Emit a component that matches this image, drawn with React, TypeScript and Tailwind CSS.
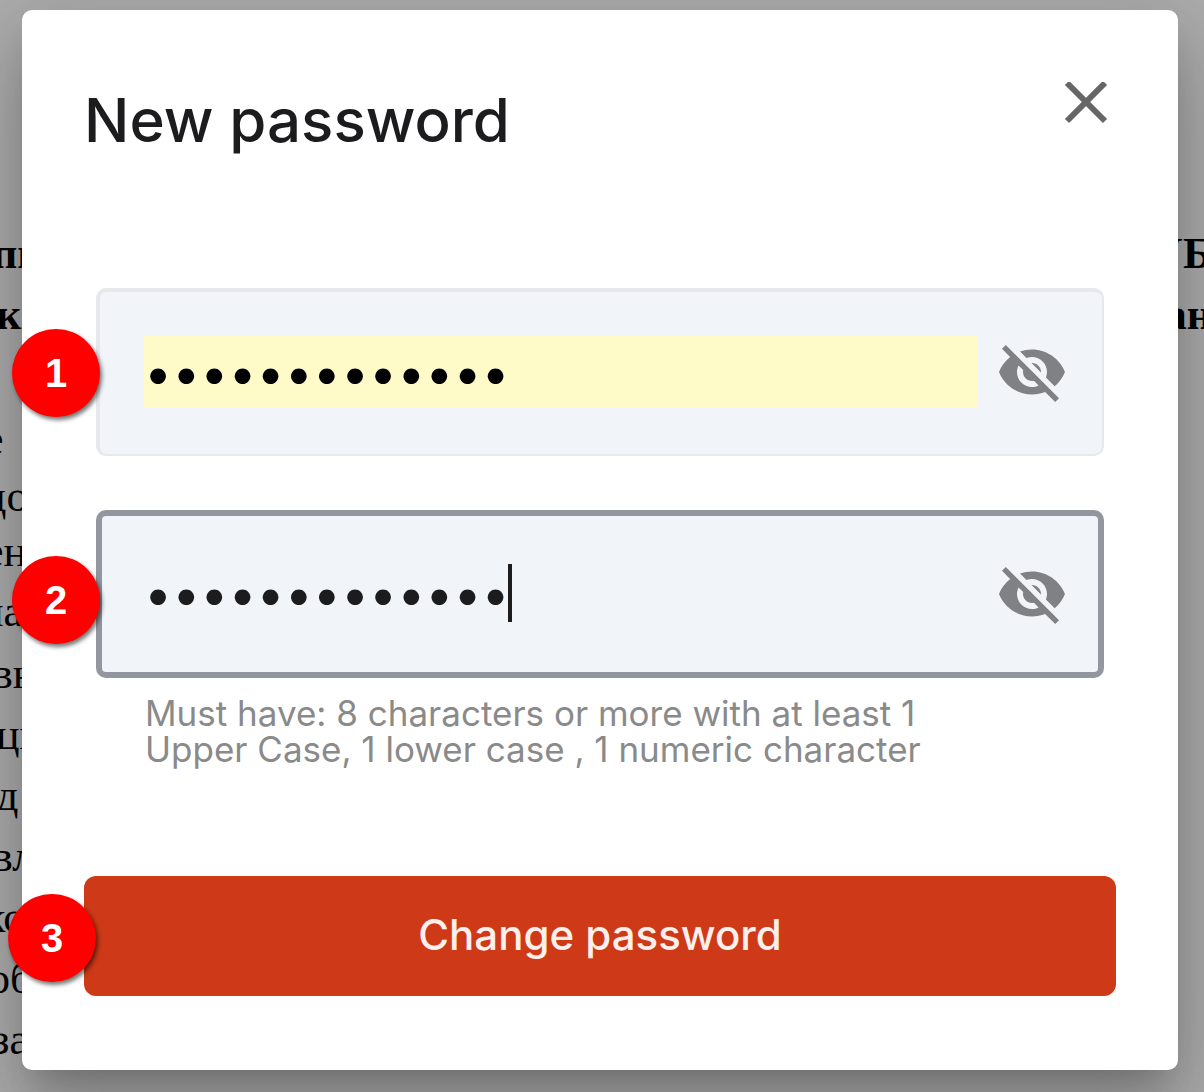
import { useState } from "react";
import { MdVisibilityOff } from "react-icons/md";

// Page behind the dialog
const pageLines = [
  { start: "пи", end: "УБ", className: "-ml-2 font-bold leading-[61px]" },
  { start: "ки", end: "ан", className: "-ml-1 font-bold leading-[61px]" },
  { start: "", end: "", className: "h-[64px]" },
  { start: "е", end: "", className: "-ml-4 leading-[61px]" },
  { start: "до", end: "", className: "-ml-4 leading-[53px]" },
  { start: "ен", end: "", className: "-ml-4 leading-[57px]" },
  { start: "на", end: "", className: "-ml-5 leading-[63px]" },
  { start: "вн", end: "", className: "-ml-2 leading-[61px]" },
  { start: "ци", end: "", className: "-ml-1 leading-[61px]" },
  { start: "д", end: "", className: "-ml-1 leading-[61px]" },
  { start: "вл", end: "", className: "-ml-2 leading-[61px]" },
  { start: "ко", end: "", className: "-ml-4 leading-[61px]" },
  { start: "об", end: "", className: "-ml-3 leading-[61px]" },
  { start: "за", end: "", className: "-ml-2 leading-[61px]" },
];

function Badge({ step, className }: { step: number; className: string }) {
  return (
    <span
      className={`absolute z-10 flex h-[88px] w-[88px] items-center justify-center rounded-full bg-[#ff0000] font-['Liberation_Sans',sans-serif] text-[40px] font-bold leading-none text-white shadow-[2px_3px_4px_rgba(0,0,0,0.55)] ${className}`}
    >
      {step}
    </span>
  );
}

export default function App() {
  const [password, setPassword] = useState("Abcdefgh12345");
  const [confirm, setConfirm] = useState("Abcdefgh12345");
  const [hidden, setHidden] = useState(true);
  const [confirmHidden, setConfirmHidden] = useState(true);

  return (
    <div className="relative min-h-screen overflow-hidden bg-[#adadad] font-['Inter',sans-serif]">
      <div
        aria-hidden="true"
        className="absolute inset-0 overflow-hidden pt-[223px] font-['Liberation_Serif',serif] text-[44px] text-black"
      >
        {pageLines.map((line, i) => (
          <p key={i} className={`flex justify-between ${line.className}`}>
            <span>{line.start}</span>
            <span className="-mr-2">{line.end}</span>
          </p>
        ))}
      </div>

      <div className="relative pt-[10px] pr-[26px] pb-[22px] pl-[22px]">
        <form
          role="dialog"
          aria-labelledby="dialog-title"
          onSubmit={(e) => e.preventDefault()}
          className="rounded-[10px] bg-white px-[62px] pt-[72px] pb-[74px] shadow-[0_22px_30px_-14px_rgba(0,0,0,0.2),0_48px_76px_6px_rgba(0,0,0,0.14),0_18px_92px_16px_rgba(0,0,0,0.12)]"
        >
          {/* Header */}
          <div className="flex h-[206px] items-start justify-between">
            <h1 id="dialog-title" className="text-[60px] font-medium leading-[76px] text-[#1c1c1e]">
              New password
            </h1>
            <button type="button" aria-label="Close" className="mr-2 text-[#666666]">
              <svg viewBox="0 0 44 44" className="h-11 w-11" fill="none" stroke="currentColor" strokeWidth="6">
                <path d="M3 1 41 39M41 1 3 39" />
              </svg>
            </button>
          </div>

          {/* Fields */}
          <div className="px-3">
            <div className="relative flex h-[168px] items-center justify-between rounded-[10px] border-t-4 border-r-2 border-b-2 border-l-4 border-[#e6e8ed] bg-[#f1f5fa] pr-[34px] pb-0.5 pl-11">
              <Badge step={1} className="top-[37px] -left-[88px]" />
              <input
                type={hidden ? "password" : "text"}
                aria-label="New password"
                value={password}
                onChange={(e) => setPassword(e.target.value)}
                className="mr-[18px] h-[72px] min-w-0 flex-1 bg-[#fffbc8] px-0 pt-0.5 text-[50px] text-black outline-none"
              />
              <button type="button" aria-label="Show password" onClick={() => setHidden(!hidden)}>
                <MdVisibilityOff className="h-[72px] w-[72px] text-[#808184]" />
              </button>
            </div>

            <div className="relative mt-[54px] flex h-[168px] items-center justify-between rounded-[10px] border-[6px] border-[#92969e] bg-[#f1f5fa] pr-[30px] pl-[42px]">
              <Badge step={2} className="top-[40px] -left-[90px]" />
              <div className="relative mr-[18px] flex min-w-0 flex-1 items-center">
                <input
                  type={confirmHidden ? "password" : "text"}
                  aria-label="Confirm password"
                  value={confirm}
                  onChange={(e) => setConfirm(e.target.value)}
                  className="h-[72px] w-full bg-transparent px-0 text-[50px] text-[#1c1c1e] caret-transparent outline-none"
                />
                <span className="absolute top-[6px] left-[364px] h-[58px] w-1 bg-[#1c1c1e]" />
              </div>
              <button
                type="button"
                aria-label="Show confirmed password"
                onClick={() => setConfirmHidden(!confirmHidden)}
              >
                <MdVisibilityOff className="h-[72px] w-[72px] text-[#808184]" />
              </button>
            </div>

            <p className="mt-[17px] ml-[49px] h-[145px] text-[35px] leading-[36px] text-[#8a8a8a]">
              Must have: 8 characters or more with at least 1
              <br />
              Upper Case, 1 lower case , 1 numeric character
            </p>
          </div>

          {/* Action */}
          <div className="relative mt-[36px]">
            <Badge step={3} className="top-[18px] -left-[76px]" />
            <button
              type="submit"
              className="h-[120px] w-full rounded-[12px] bg-[#ce3a17] pb-1 text-[42px] font-medium text-[#fdf0ec]"
            >
              Change password
            </button>
          </div>
        </form>
      </div>
    </div>
  );
}
